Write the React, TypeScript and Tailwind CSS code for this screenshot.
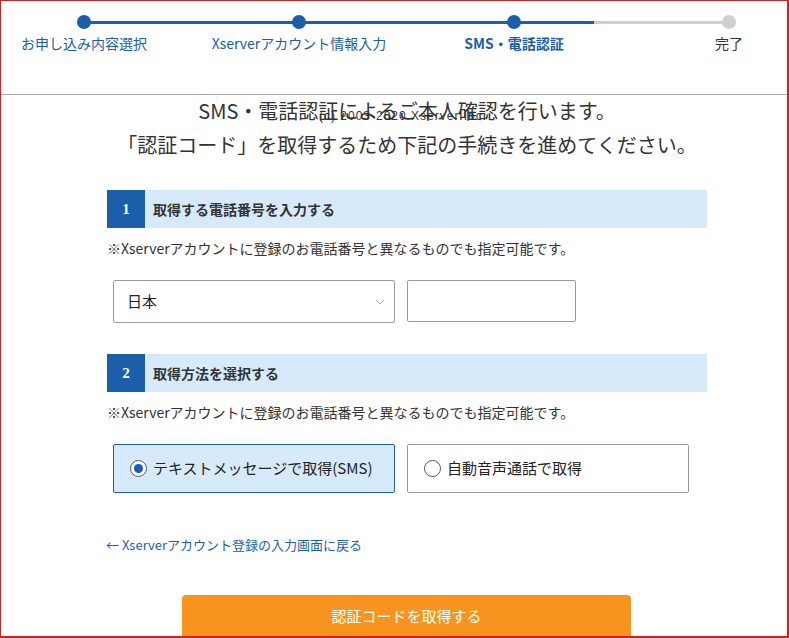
import React from 'react'

const font = { fontFamily: '"Noto Sans CJK JP", "Noto Sans", sans-serif' }

const steps = [
  { label: 'お申し込み内容選択', state: 'done' },
  { label: 'Xserverアカウント情報入力', state: 'done' },
  { label: 'SMS・電話認証', state: 'current' },
  { label: '完了', state: 'todo' },
]

function SectionHeader({ num, title }: { num: string; title: string }) {
  return (
    <div className="flex h-[38px] bg-[#d7eafc]">
      <div
        className="w-[38px] h-[38px] bg-[#1b5ea9] text-white flex items-center justify-center text-[15px] font-bold"
        style={{ fontFamily: '"Liberation Serif", serif' }}
      >
        {num}
      </div>
      <div className="pl-2 flex items-center text-[14px] font-bold text-[#333]">{title}</div>
    </div>
  )
}

function Note() {
  return (
    <p className="mt-[10px] text-[14px] leading-[20px] text-[#333]">
      ※Xserverアカウントに登録のお電話番号と異なるものでも指定可能です。
    </p>
  )
}

export default function App() {
  return (
    <div
      className="relative w-[789px] h-[638px] overflow-hidden bg-white border-l border-t border-r-2 border-b-2 border-[#d42020]"
      style={font}
    >
      {/* Progress */}
      <div className="h-[94px] border-b border-[#aaaaaa] pt-[14px]">
        <div className="relative ml-[76px] w-[659px]">
          <div className="absolute left-[7px] top-[6px] w-[645px] h-[3px] bg-[#d0d0d0]">
            <div className="h-[3px] w-[510px] bg-[#1b5ea9]" />
          </div>
          <div className="relative flex justify-between">
            {steps.map((s) => (
              <div key={s.label} className="w-[14px] flex flex-col items-center">
                <div
                  className={`w-[14px] h-[14px] rounded-full ${
                    s.state === 'todo' ? 'bg-[#d0d0d0]' : 'bg-[#1b5ea9]'
                  }`}
                />
                <div
                  className={`mt-[4px] whitespace-nowrap text-[14px] leading-[20px] ${
                    s.state === 'todo'
                      ? 'text-[#333]'
                      : s.state === 'current'
                      ? 'text-[#1b5ea9] font-bold'
                      : 'text-[#1b5ea9]'
                  }`}
                >
                  {s.label}
                </div>
              </div>
            ))}
          </div>
        </div>
      </div>

      <div className="ml-[106px] w-[600px]">
        <div className="-mt-[1px] text-center text-[20px] leading-[34px] text-[#333]">
          <p>SMS・電話認証によるご本人確認を行います。</p>
          <p>「認証コード」を取得するため下記の手続きを進めてください。</p>
        </div>

        <div className="mt-[28px]">
          <SectionHeader num="1" title="取得する電話番号を入力する" />
          <Note />
          <div className="mt-[22px] ml-[6px] flex gap-[12px]">
            <div className="w-[282px] h-[43px] border border-[#9a9a9a] rounded-[2px] flex items-center justify-between pl-[13px] pr-[9px]">
              <span className="text-[15px] text-[#222]">日本</span>
              <svg width="10" height="6" viewBox="0 0 10 6" fill="none">
                <path d="M1 1l4 4 4-4" stroke="#b0b0b0" strokeWidth="1" />
              </svg>
            </div>
            <div className="w-[169px] h-[42px] border border-[#9a9a9a] rounded-[2px]" />
          </div>
        </div>

        <div className="mt-[31px]">
          <SectionHeader num="2" title="取得方法を選択する" />
          <Note />
          <div className="mt-[22px] ml-[6px] flex gap-[12px]">
            <div className="w-[282px] h-[49px] border border-[#1b5ea9] bg-[#d7eafc] rounded-[2px] flex items-center pl-[16px] gap-[6px]">
              <span className="w-[17px] h-[17px] rounded-full border border-[#555] bg-white flex items-center justify-center">
                <span className="w-[9px] h-[9px] rounded-full bg-[#1b5ea9]" />
              </span>
              <span className="text-[15px] text-[#222]">テキストメッセージで取得(SMS)</span>
            </div>
            <div className="w-[282px] h-[49px] border border-[#9a9a9a] bg-white rounded-[2px] flex items-center pl-[16px] gap-[6px]">
              <span className="w-[17px] h-[17px] rounded-full border border-[#555] bg-white" />
              <span className="text-[15px] text-[#222]">自動音声通話で取得</span>
            </div>
          </div>
        </div>

        <div className="mt-[43px] -ml-[1px] text-[13px] leading-[18px] text-[#1b5ea9]">
          ← Xserverアカウント登録の入力画面に戻る
        </div>

        <div className="mt-[41px] ml-[75px] w-[449px] h-[60px] bg-[#f7941e] rounded-t-[4px] text-center text-white text-[15px] leading-[42px]">
          認証コードを取得する
        </div>
      </div>

      <div
        className="absolute left-[318px] top-[108px] text-[12px] leading-[14px] text-[#333] tracking-[1px]"
        style={{ fontFamily: '"Liberation Sans", sans-serif' }}
      >
        (c) 2003-2020 Xserver Inc.
      </div>
    </div>
  )
}
